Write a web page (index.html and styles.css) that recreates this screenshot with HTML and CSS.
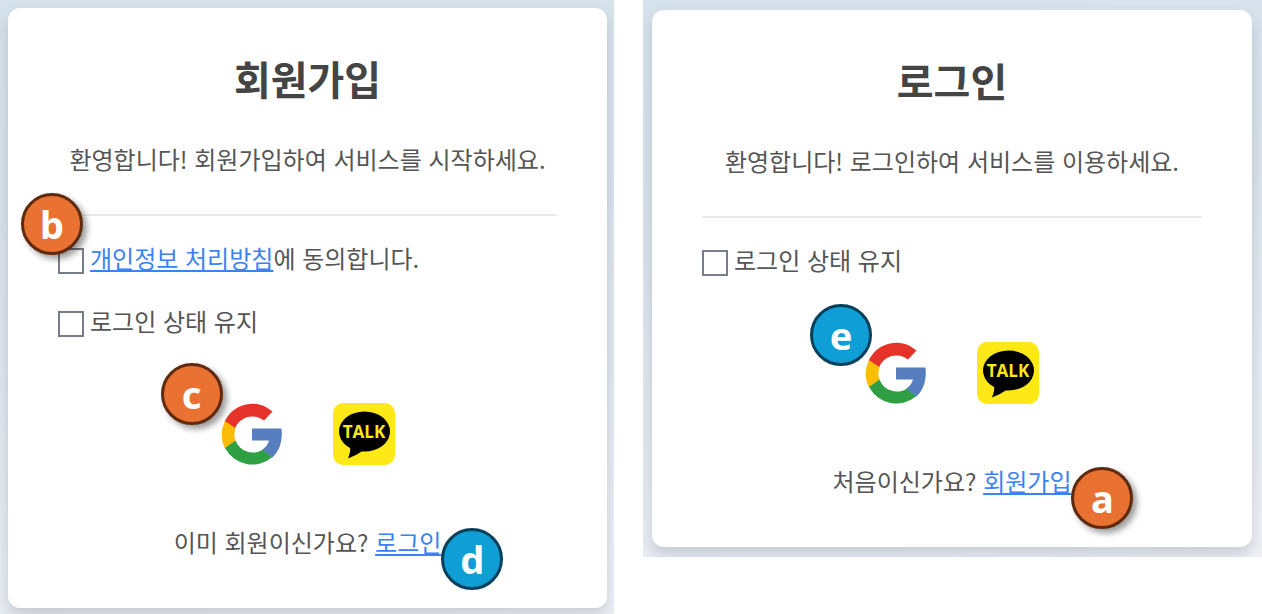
FILE: index.html
```html
<!DOCTYPE html>
<html lang="ko">
<head>
<meta charset="utf-8">
<title>회원가입 / 로그인</title>
<link rel="stylesheet" href="styles.css">
</head>
<body>
<main class="board">
  <section class="panel panel-signup">
    <div class="card">
      <h1 class="title">회원가입</h1>
      <p class="lead">환영합니다! 회원가입하여 서비스를 시작하세요.</p>
      <hr class="rule">
      <div class="options">
        <div class="option">
          <input class="check" type="checkbox" id="privacy">
          <label for="privacy"><a class="link" href="#">개인정보 처리방침</a>에 동의합니다.</label>
          <span class="badge badge-orange badge-b">b</span>
        </div>
        <div class="option">
          <input class="check" type="checkbox" id="keep-signup">
          <label for="keep-signup">로그인 상태 유지</label>
        </div>
      </div>
      <div class="socials">
        <button class="social" type="button" aria-label="Google">
          <svg class="logo" viewBox="0 0 62 62">
            <path fill="#e63329" d="M3.500 19A30.500 31 0 0 1 51.500 8.500L43 17.500A18.500 18.500 0 0 0 14 25.500Z"/>
            <path fill="#fbbc05" d="M4 18L14.500 25.300A19 19 0 0 0 14.500 38L4 45.500A31 31 0 0 1 4 18Z"/>
            <path fill="#2f9f43" d="M4 45L14.500 37.500A18.500 18.500 0 0 0 42 46.500L51.500 54A31 31 0 0 1 4 45Z"/>
            <path fill="#567dbe" d="M31 25.500H60.500C61.800 37 59 47.500 51.500 54.500L41.500 46.500C45 44 47 41.500 48 37.500H31Z"/>
          </svg>
          <span class="badge badge-orange badge-c">c</span>
        </button>
        <button class="social" type="button" aria-label="KakaoTalk">
          <svg class="logo" viewBox="0 0 62 62">
            <rect width="62" height="62" rx="10" fill="#fee815"/>
            <ellipse cx="31.500" cy="28.500" rx="25.500" ry="20" fill="#000"/>
            <path fill="#000" d="M17 43Q18 48 15 55.500Q24 52 31 47Z"/>
            <text class="talk-text" x="31" y="35" text-anchor="middle">TALK</text>
          </svg>
        </button>
      </div>
      <p class="switch">이미 회원이신가요? <span class="anchor"><a class="link" href="#">로그인</a><span class="badge badge-blue badge-link">d</span></span></p>
    </div>
  </section>
  <section class="panel panel-login">
    <div class="card">
      <h1 class="title">로그인</h1>
      <p class="lead">환영합니다! 로그인하여 서비스를 이용하세요.</p>
      <hr class="rule">
      <div class="options">
        <div class="option">
          <input class="check" type="checkbox" id="keep-login">
          <label for="keep-login">로그인 상태 유지</label>
        </div>
      </div>
      <div class="socials">
        <button class="social" type="button" aria-label="Google">
          <svg class="logo" viewBox="0 0 62 62">
            <path fill="#e63329" d="M3.500 19A30.500 31 0 0 1 51.500 8.500L43 17.500A18.500 18.500 0 0 0 14 25.500Z"/>
            <path fill="#fbbc05" d="M4 18L14.500 25.300A19 19 0 0 0 14.500 38L4 45.500A31 31 0 0 1 4 18Z"/>
            <path fill="#2f9f43" d="M4 45L14.500 37.500A18.500 18.500 0 0 0 42 46.500L51.500 54A31 31 0 0 1 4 45Z"/>
            <path fill="#567dbe" d="M31 25.500H60.500C61.800 37 59 47.500 51.500 54.500L41.500 46.500C45 44 47 41.500 48 37.500H31Z"/>
          </svg>
          <span class="badge badge-blue badge-e">e</span>
        </button>
        <button class="social" type="button" aria-label="KakaoTalk">
          <svg class="logo" viewBox="0 0 62 62">
            <rect width="62" height="62" rx="10" fill="#fee815"/>
            <ellipse cx="31.500" cy="28.500" rx="25.500" ry="20" fill="#000"/>
            <path fill="#000" d="M17 43Q18 48 15 55.500Q24 52 31 47Z"/>
            <text class="talk-text" x="31" y="35" text-anchor="middle">TALK</text>
          </svg>
        </button>
      </div>
      <p class="switch">처음이신가요? <span class="anchor"><a class="link" href="#">회원가입</a><span class="badge badge-orange badge-link">a</span></span></p>
    </div>
  </section>
</main>
</body>
</html>
```
FILE: styles.css
```css
* {
  box-sizing: border-box;
}

body {
  margin: 0;
  background: #fff;
  color: #555;
  font-family: "Noto Sans CJK KR", "Noto Sans", sans-serif;
  font-size: 24px;
  line-height: 32px;
}

.board {
  display: grid;
  grid-template-columns: 614fr 619fr;
  align-items: start;
  gap: 29px;
}

.panel {
  overflow: hidden;
  background: linear-gradient(170deg, #d5e1eb 0%, #dae3ec 40%, #eff1f6 100%);
}

.panel-signup {
  padding: 8px 7px 6px 8px;
}

.panel-login {
  padding: 10px 10px 10px 9px;
}

.card {
  padding: 46px 50px 50px;
  border-radius: 12px;
  background: #fff;
  box-shadow: 0 8px 14px rgba(60, 70, 90, 0.2);
}

.title {
  margin: 0 0 41px;
  color: #444;
  font-size: 40px;
  font-weight: 700;
  line-height: 48px;
  text-align: center;
}

.lead {
  margin: 0;
  text-align: center;
  white-space: nowrap;
}

.rule {
  height: 2px;
  margin: 39px 0 26px;
  border: 0;
  background: #e9ebf0;
}

.options {
  display: flex;
  flex-direction: column;
  gap: 31px;
}

.option {
  position: relative;
  display: flex;
  align-items: center;
  gap: 6px;
}

.check {
  appearance: none;
  width: 26px;
  height: 26px;
  margin: 5px 0 0;
  border: 2px solid #777c88;
  background: #fff;
}

.link {
  color: #3b82f6;
  text-decoration: underline;
  text-decoration-thickness: 2px;
  text-underline-offset: 2px;
}

.socials {
  display: flex;
  justify-content: center;
  gap: 50px;
  margin: 66px 0 61px;
}

.social {
  position: relative;
  width: 62px;
  height: 62px;
  padding: 0;
  border: 0;
  background: none;
}

.logo {
  display: block;
  width: 62px;
  height: 62px;
}

.talk-text {
  fill: #fee815;
  font-family: "Open Sans", sans-serif;
  font-size: 17px;
  font-weight: 700;
}

.switch {
  margin: 0;
  text-align: center;
  white-space: nowrap;
}

.anchor {
  position: relative;
}

.badge {
  position: absolute;
  display: flex;
  align-items: center;
  justify-content: center;
  width: 62px;
  height: 62px;
  border: 3px solid;
  border-radius: 50%;
  color: #fff;
  font-family: "Noto Sans", sans-serif;
  font-size: 38px;
  font-weight: 700;
  line-height: 52px;
}

.badge-orange {
  border-color: #5f2a0e;
  background: #e97132;
  box-shadow: 4px 4px 6px rgba(0, 0, 0, 0.4);
}

.badge-blue {
  border-color: #07405a;
  background: #0f9ed5;
}

.badge-b {
  top: -49px;
  left: -37px;
}

.badge-c {
  top: -40px;
  left: -60px;
}

.badge-e {
  top: -38px;
  left: -55px;
}

.badge-link {
  top: 4px;
  left: 100%;
}
```
